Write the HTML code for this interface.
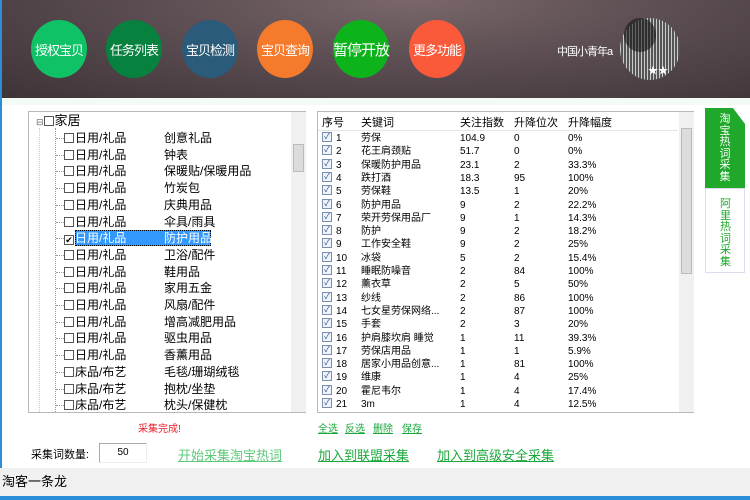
<!DOCTYPE html>
<html><head><meta charset="utf-8"><style>
*{margin:0;padding:0;box-sizing:border-box}
body{width:750px;height:500px;position:relative;overflow:hidden;background:#fff;font-family:"Liberation Sans","Noto Sans CJK SC",sans-serif;font-size:12px;color:#000}
.hdr{position:absolute;left:0;top:0;width:750px;height:98px;background:radial-gradient(ellipse at 55% 0%,#7a676a 0%,#5e5054 40%,#3e3337 100%)}
.c{position:absolute;top:20px;width:56px;height:58px;border-radius:50%;color:#fff;font-size:13px;letter-spacing:-1px;display:flex;align-items:center;justify-content:center;white-space:nowrap}
.lb{position:absolute;left:0;top:0;width:2px;height:500px;background:#2a8fd8}
.box{position:absolute;border:1px solid #b8b8b8;background:#fff}
.r{position:absolute;white-space:nowrap;font-size:12px;line-height:14px}
.cb{display:inline-block;width:10px;height:10px;border:1px solid #555;vertical-align:-1px;margin-right:1px;background:#fff}
.t{position:absolute;font-size:10px;white-space:nowrap;line-height:12px}
.tc{position:absolute;width:10px;height:10px;border:1px solid #7a8fb0;background:#eef3fb;font-size:8px;line-height:8px;color:#2a4a8a;text-align:center;overflow:hidden}
.sb{position:absolute;background:#f0f0f0}
.lnk{position:absolute;color:#1aa83a;text-decoration:underline;white-space:nowrap}
.hl{position:absolute;width:8px;border-top:1px dotted #999}
.tab{position:absolute;left:705px;width:40px;font-size:11px;line-height:11.5px;text-align:center;padding-left:14px;padding-right:14px;word-break:break-all}
</style></head><body>
<div class="hdr"></div>
<div class="lb"></div>
<div class="c" style="left:31px;background:#0fc266">授权宝贝</div>
<div class="c" style="left:106px;background:#07813e">任务列表</div>
<div class="c" style="left:182px;background:#2b5b7a">宝贝检测</div>
<div class="c" style="left:257px;background:#f57a2c">宝贝查询</div>
<div class="c" style="left:333px;background:#0db31b;font-size:15px">暂停开放</div>
<div class="c" style="left:409px;background:#fb5a3a">更多功能</div>
<div style="position:absolute;left:557px;top:43px;color:#fff;font-size:11px;letter-spacing:-1px">中国小青年a</div>
<div style="position:absolute;left:620px;top:18px;width:60px;height:62px;border-radius:50%;background:repeating-linear-gradient(90deg,#ccc 0 1px,#555 1px 3px)"></div>
<div style="position:absolute;left:624px;top:18px;width:32px;height:34px;border-radius:50%;background:#111;opacity:.55"></div>
<div style="position:absolute;left:648px;top:62px;color:#fff;font-size:10px">★★</div>
<div style="position:absolute;left:2px;top:98px;width:748px;height:7px;background:#f4fbf4"></div>

<div class="box" style="left:28px;top:111px;width:278px;height:302px">
<div class="sb" style="left:262px;top:0;width:15px;height:300px"></div>
<div class="sb" style="left:264px;top:32px;width:11px;height:28px;background:#dcdcdc;border:1px solid #bbb"></div>
<div style="position:absolute;left:26px;top:16px;height:284px;border-left:1px dotted #999"></div>
<div style="position:absolute;left:10px;top:16px;height:284px;border-left:1px dotted #ccc"></div>
</div>
<div class="r" style="left:36px;top:114px;font-size:13px"><span style="font-size:9px;color:#666">⊟</span><span class="cb"></span>家居</div>
<div id="tree"></div>

<div class="box" style="left:317px;top:111px;width:377px;height:302px">
<div class="sb" style="left:361px;top:0;width:15px;height:300px"></div>
<div class="sb" style="left:363px;top:16px;width:11px;height:146px;background:#dcdcdc;border:1px solid #bbb"></div>
</div>
<div class="t" style="left:322px;top:117px;font-size:11px">序号</div><div class="t" style="left:361px;top:117px;font-size:11px">关键词</div><div class="t" style="left:460px;top:117px;font-size:11px">关注指数</div><div class="t" style="left:514px;top:117px;font-size:11px">升降位次</div><div class="t" style="left:568px;top:117px;font-size:11px">升降幅度</div>
<div style="position:absolute;left:318px;top:130px;width:360px;border-top:1px solid #e6e6e6"></div>
<div id="rows"></div>
<script>
var tr=[["日用/礼品","创意礼品"],["日用/礼品","钟表"],["日用/礼品","保暖贴/保暖用品"],["日用/礼品","竹炭包"],["日用/礼品","庆典用品"],["日用/礼品","伞具/雨具"],["日用/礼品","防护用品"],["日用/礼品","卫浴/配件"],["日用/礼品","鞋用品"],["日用/礼品","家用五金"],["日用/礼品","风扇/配件"],["日用/礼品","增高减肥用品"],["日用/礼品","驱虫用品"],["日用/礼品","香薰用品"],["床品/布艺","毛毯/珊瑚绒毯"],["床品/布艺","抱枕/坐垫"],["床品/布艺","枕头/保健枕"]];
var g="";for(var j=0;j<17;j++){var ty=Math.round(131+j*16.7);var sel=j==6;
g+='<div class="hl" style="left:56px;top:'+(ty+7)+'px"></div>';
if(sel)g+='<div style="position:absolute;left:75px;top:'+(ty-1)+'px;width:136px;height:16px;background:#3399ff;border:1px dotted #000"></div>';
g+='<div class="r" style="left:64px;top:'+ty+'px">'+(sel?'<span class="cb" style="text-align:center;font-size:9px;line-height:8px">✔</span><span style="color:#fff">':'<span class="cb"></span><span>')+tr[j][0]+'</span></div><div class="r" style="left:164px;top:'+ty+'px;'+(sel?'color:#fff':'')+'">'+tr[j][1]+'</div>';}
document.getElementById("tree").innerHTML=g;
var d=[["劳保","104.9","0","0%"],["花王肩颈贴","51.7","0","0%"],["保暖防护用品","23.1","2","33.3%"],["跌打酒","18.3","95","100%"],["劳保鞋","13.5","1","20%"],["防护用品","9","2","22.2%"],["荣开劳保用品厂","9","1","14.3%"],["防护","9","2","18.2%"],["工作安全鞋","9","2","25%"],["冰袋","5","2","15.4%"],["睡眠防噪音","2","84","100%"],["薰衣草","2","5","50%"],["纱线","2","86","100%"],["七女星劳保网络...","2","87","100%"],["手套","2","3","20%"],["护肩膝坎肩 睡觉","1","11","39.3%"],["劳保店用品","1","1","5.9%"],["居家小用品创意...","1","81","100%"],["维康","1","4","25%"],["霍尼韦尔","1","4","17.4%"],["3m","1","4","12.5%"]];
var h="";for(var i=0;i<21;i++){var y=133+i*13.3;h+='<div class="tc" style="left:322px;top:'+(y-1)+'px">✓</div><div class="t" style="left:336px;top:'+y+'px">'+(i+1)+'</div><div class="t" style="left:361px;top:'+y+'px">'+d[i][0]+'</div><div class="t" style="left:460px;top:'+y+'px">'+d[i][1]+'</div><div class="t" style="left:514px;top:'+y+'px">'+d[i][2]+'</div><div class="t" style="left:568px;top:'+y+'px">'+d[i][3]+'</div>';}
document.getElementById("rows").innerHTML=h;
</script>

<div class="tab" style="top:108px;height:80px;background:#1fa82a;color:#fff;padding-top:6px;clip-path:polygon(0 0,70% 0,100% 20%,100% 100%,0 100%)">淘宝热词采集</div>
<div class="tab" style="top:188px;height:85px;background:#fff;border:1px solid #dde;color:#1fa82a;padding-top:10px">阿里热词采集</div>

<div style="position:absolute;left:138px;top:420px;color:#e8202a;font-size:10px">采集完成!</div>
<div class="lnk" style="left:318px;top:420px;font-size:10px">全选</div>
<div class="lnk" style="left:345px;top:420px;font-size:10px">反选</div>
<div class="lnk" style="left:373px;top:420px;font-size:10px">删除</div>
<div class="lnk" style="left:402px;top:420px;font-size:10px">保存</div>
<div style="position:absolute;left:31px;top:446px;font-size:11px">采集词数量:</div>
<div style="position:absolute;left:99px;top:443px;width:48px;height:20px;border:1px solid #aaa;border-right-color:#eee;border-bottom-color:#eee;font-size:10px;text-align:center;line-height:18px">50</div>
<div class="lnk" style="left:178px;top:445px;font-size:13px;color:#5cc878">开始采集淘宝热词</div>
<div class="lnk" style="left:318px;top:445px;font-size:13px">加入到联盟采集</div>
<div class="lnk" style="left:437px;top:445px;font-size:13px">加入到高级安全采集</div>

<div style="position:absolute;left:0;top:468px;width:750px;height:28px;background:#f0f0f0;font-size:13px;line-height:28px;padding-left:2px">淘客一条龙</div>
<div style="position:absolute;left:0;top:496px;width:750px;height:4px;background:#2a8fd8"></div>
</body></html>
